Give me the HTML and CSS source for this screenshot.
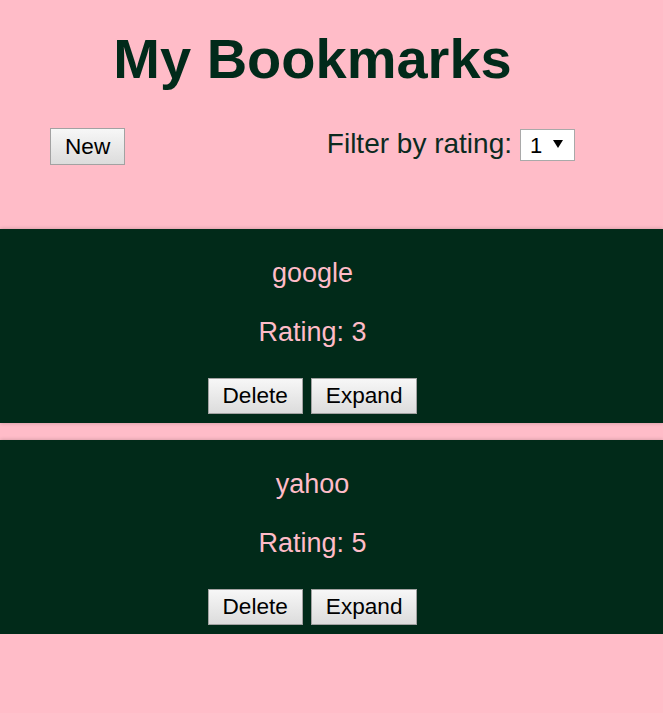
FILE: index.html
```html
<!DOCTYPE html>
<html lang="en">
<head>
<meta charset="utf-8">
<title>My Bookmarks</title>
<link rel="stylesheet" href="styles.css">
</head>
<body>
<header class="header">
  <h1 class="title">My Bookmarks</h1>
  <div class="toolbar">
    <button class="btn">New</button>
    <div class="filter">
      <span class="filter-label">Filter by rating:</span>
      <span class="select-wrap">
        <select class="select">
          <option>1</option>
          <option>2</option>
          <option>3</option>
          <option>4</option>
          <option>5</option>
        </select>
      </span>
    </div>
  </div>
</header>
<main class="list">
  <section class="card">
    <p class="card-name">google</p>
    <p class="card-rating">Rating: 3</p>
    <div class="card-actions">
      <button class="btn">Delete</button>
      <button class="btn">Expand</button>
    </div>
  </section>
  <section class="card">
    <p class="card-name">yahoo</p>
    <p class="card-rating">Rating: 5</p>
    <div class="card-actions">
      <button class="btn">Delete</button>
      <button class="btn">Expand</button>
    </div>
  </section>
</main>
</body>
</html>
```
FILE: styles.css
```css
html, body {
  margin: 0;
  padding: 0;
}
body {
  background: #ffbcc8;
  font-family: "Liberation Sans", Arial, sans-serif;
  color: #012a1a;
}
.header {
  padding: 27px 38px 64px 0;
}
.title {
  margin: 0;
  font-size: 56px;
  line-height: 64px;
  font-weight: bold;
  text-align: center;
  color: #012a1a;
}
.toolbar {
  margin-top: 37px;
  padding: 0 50px;
  display: flex;
  align-items: flex-start;
  justify-content: space-between;
}
.btn {
  font-family: "Liberation Sans", Arial, sans-serif;
  font-size: 22.6px;
  line-height: 25px;
  padding: 5px 14px;
  border: 1px solid #a2a2a2;
  border-radius: 0;
  background: linear-gradient(#f7f7f7, #dcdcdc);
  color: #000;
  margin: 0;
}
.filter {
  display: flex;
  align-items: baseline;
  gap: 8px;
  margin-top: 1px;
}
.filter-label {
  font-size: 28px;
  line-height: 28px;
  color: #0b2a1f;
}
.select-wrap {
  position: relative;
  display: inline-block;
}
.select {
  appearance: none;
  -webkit-appearance: none;
  width: 55px;
  height: 32px;
  padding: 0 0 0 9px;
  margin: 0;
  border: 1px solid #a9a9a9;
  border-radius: 0;
  background: #fff;
  color: #000;
  font-family: "Liberation Sans", Arial, sans-serif;
  font-size: 22px;
  display: block;
}
.select-wrap::after {
  content: "";
  position: absolute;
  left: 33px;
  top: 11px;
  width: 0;
  height: 0;
  border-left: 5px solid transparent;
  border-right: 5px solid transparent;
  border-top: 8px solid #000;
  pointer-events: none;
}
.list {
  display: flex;
  flex-direction: column;
  gap: 17px;
}
.card {
  background: #012a19;
  color: #ffbcc8;
  padding: 29px 38px 9px 0;
  text-align: center;
  box-shadow: 0 0 4px rgba(0, 0, 0, 0.22);
}
.card-name,
.card-rating {
  margin: 0;
  font-size: 27px;
  line-height: 31px;
}
.card-rating {
  margin-top: 28px;
}
.card-actions {
  margin-top: 30px;
  display: flex;
  justify-content: center;
  gap: 8px;
}
.card-actions .btn {
  line-height: 24px;
}
```
